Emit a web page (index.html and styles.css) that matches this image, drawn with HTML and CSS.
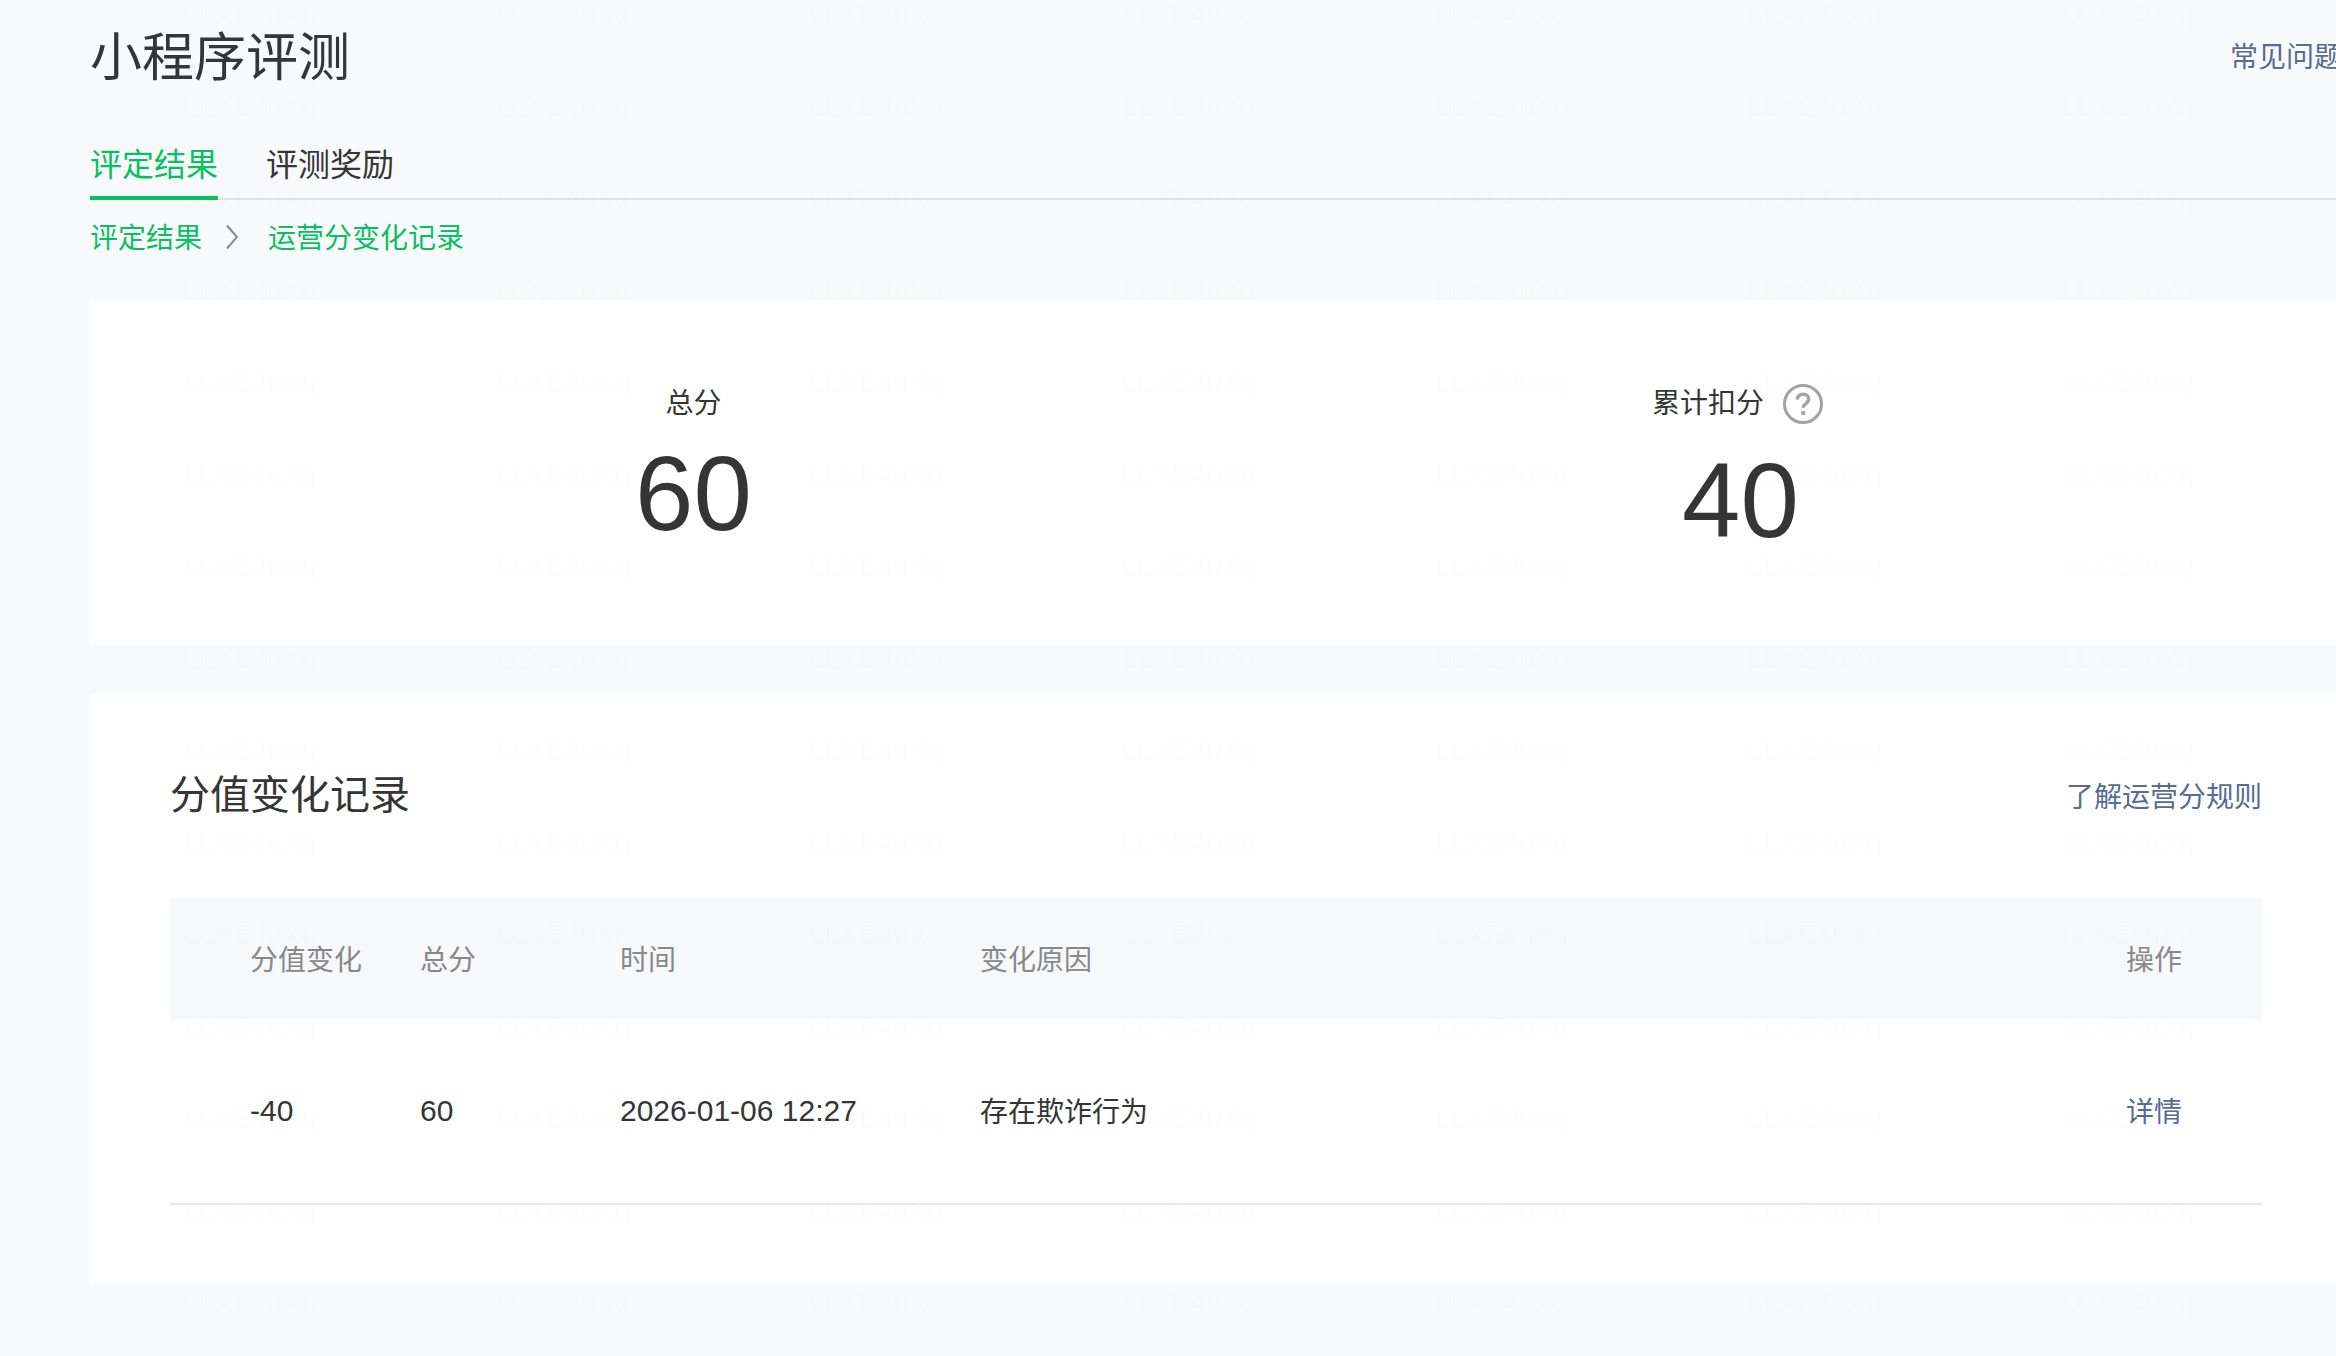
FILE: index.html
```html
<!DOCTYPE html>
<html lang="zh-CN">
<head>
  <meta charset="UTF-8">
  <title>小程序评测</title>
  <link rel="stylesheet" href="styles.css">
</head>
<body>
  <div class="main">
    <div class="header">
      <h1>小程序评测</h1>
      <a class="link faq" href="#">常见问题</a>
    </div>

    <div class="tabs">
      <a class="tab active" href="#">评定结果</a>
      <a class="tab" href="#">评测奖励</a>
    </div>

    <div class="crumbs">
      <a href="#">评定结果</a>
      <svg class="crumb-arrow" width="12" height="26" viewBox="0 0 12 26">
        <path d="M1 1.5L11 13L1 24.5" fill="none" stroke="#88888c" stroke-width="2"/>
      </svg>
      <a href="#">运营分变化记录</a>
    </div>

    <div class="card score-card">
      <div class="score total">
        <div class="score-label">总分</div>
        <div class="score-num">60</div>
      </div>
      <div class="score deducted">
        <div class="score-label">累计扣分
          <svg class="help" width="40" height="40" viewBox="0 0 40 40">
            <circle cx="20" cy="20" r="18.5" fill="none" stroke="#a3a3a3" stroke-width="3"/>
            <path d="M14.2 15.6c0-3.3 2.5-5.4 5.8-5.4 3.2 0 5.7 2 5.7 4.9 0 2.2-1.2 3.3-2.9 4.5-1.6 1.2-2.6 2.1-2.6 4.2" fill="none" stroke="#a3a3a3" stroke-width="3.4"/>
            <circle cx="20.2" cy="29" r="2.2" fill="#a3a3a3"/>
          </svg>
        </div>
        <div class="score-num">40</div>
      </div>
    </div>

    <div class="card records">
      <div class="records-head">
        <h2>分值变化记录</h2>
        <a class="link rule-link" href="#">了解运营分规则</a>
      </div>
      <table class="record-table">
        <colgroup>
          <col class="col-change">
          <col class="col-total">
          <col class="col-time">
          <col>
          <col class="col-op">
        </colgroup>
        <thead>
          <tr>
            <th>分值变化</th>
            <th>总分</th>
            <th>时间</th>
            <th>变化原因</th>
            <th class="op">操作</th>
          </tr>
        </thead>
        <tbody>
          <tr>
            <td class="num">-40</td>
            <td class="num">60</td>
            <td class="num">2026-01-06 12:27</td>
            <td>存在欺诈行为</td>
            <td class="op"><a class="link" href="#">详情</a></td>
          </tr>
        </tbody>
      </table>
    </div>
  </div>

  <div class="watermark" id="watermark"></div>

  <script>
    const watermark = document.getElementById("watermark");
    for (let i = 0; i < 7 * 15; i++) {
      const mark = document.createElement("span");
      mark.textContent = "LLXE4uXq";
      watermark.appendChild(mark);
    }
  </script>
</body>
</html>
```

FILE: styles.css
```css
html, body {
  height: 100%;
  overflow: hidden;
}
body {
  margin: 0;
  background-color: #f8f9fb;
  color: #353535;
  font-family: "Liberation Sans", "Noto Sans CJK SC", sans-serif;
  font-size: 28px;
}
a {
  text-decoration: none;
}
.link {
  color: #576b95;
}

.main {
  width: 2252px;
  margin-left: 90px;
}

.header {
  display: flex;
  justify-content: space-between;
  align-items: center;
  height: 110px;
}
.header h1 {
  margin: 0;
  padding-bottom: 3px;
  font-size: 52px;
  font-weight: normal;
}

.tabs {
  display: flex;
  gap: 48px;
  height: 90px;
  border-bottom: 2px solid #e1e2e4;
  box-sizing: border-box;
}
.tab {
  height: 90px;
  box-sizing: border-box;
  padding-top: 35px;
  font-size: 32px;
  line-height: 40px;
  color: #353535;
}
.tab.active {
  color: #07c160;
  border-bottom: 4px solid #07c160;
}

.crumbs {
  display: flex;
  align-items: center;
  height: 71px;
  color: #07c160;
  font-size: 28px;
}
.crumbs a {
  color: #07c160;
}
.crumb-arrow {
  margin: 2px 30px 0 24px;
}

.card {
  background-color: #fff;
  border-radius: 3px;
}

.score-card {
  display: grid;
  grid-template-columns: 1047px 1047px;
  height: 345px;
  margin-top: 29px;
  padding-left: 80px;
  box-sizing: border-box;
}
.score {
  text-align: center;
}
.score-label {
  font-size: 28px;
  height: 36px;
  line-height: 36px;
  margin-top: 86px;
}
.score-num {
  font-size: 105px;
  line-height: 110px;
  margin-top: 17px;
}
.deducted .score-label {
  display: flex;
  justify-content: center;
  align-items: center;
  gap: 19px;
  padding-right: 6px;
}
.deducted .score-num {
  margin-top: 24px;
}

.records {
  height: 590px;
  margin-top: 49px;
  padding: 70px 80px 0;
  box-sizing: border-box;
}
.records-head {
  display: flex;
  justify-content: space-between;
  align-items: center;
  height: 56px;
  margin-bottom: 78px;
}
.records-head h2 {
  margin: 0;
  font-size: 40px;
  font-weight: normal;
}
.rule-link {
  padding-top: 5px;
}

.record-table {
  width: 100%;
  border-collapse: collapse;
  table-layout: fixed;
  font-size: 28px;
}
.col-change { width: 250px; }
.col-total { width: 200px; }
.col-time { width: 360px; }
.col-op { width: 160px; }
.record-table th,
.record-table td {
  text-align: left;
  padding: 0 0 3px;
}
.record-table th:first-child,
.record-table td:first-child {
  padding-left: 80px;
}
.record-table th {
  height: 120px;
  padding-bottom: 1px;
  background-color: #f7f8fa;
  color: #888;
  font-weight: normal;
}
.record-table td {
  height: 181px;
  border-bottom: 2px solid #e8e8ea;
}
.record-table td.num {
  font-size: 30px;
  padding-bottom: 0;
}
.record-table .op {
  text-align: right;
  padding-right: 80px;
}

.watermark {
  position: fixed;
  top: 0;
  left: 0;
  right: 0;
  bottom: 0;
  overflow: hidden;
  pointer-events: none;
  display: grid;
  grid-template-columns: repeat(7, 313px);
  grid-auto-rows: 92px;
  padding: 1px 0 0 183px;
  font-size: 28px;
  line-height: 28px;
  color: rgba(0, 0, 0, 0.008);
}
```
